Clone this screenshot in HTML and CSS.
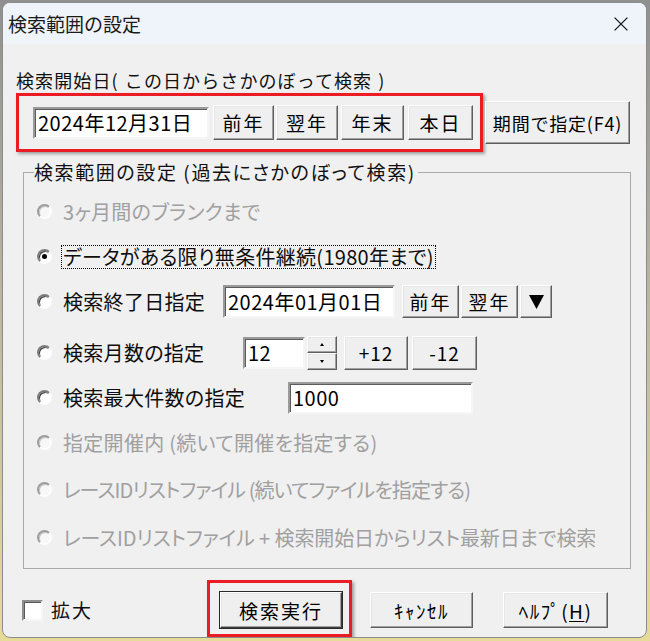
FILE: index.html
```html
<!DOCTYPE html>
<html lang="ja">
<head>
<meta charset="utf-8">
<title>検索範囲の設定</title>
<link rel="stylesheet" href="styles.css">
</head>
<body>
<div class="window">
  <div class="titlebar">
    <span class="title">検索範囲の設定</span>
    <svg class="close" width="14" height="14" viewBox="0 0 14 14"><path d="M0.6 0.6 L13.4 13.4 M13.4 0.6 L0.6 13.4" stroke="#1a1a1a" stroke-width="1.3" fill="none"/></svg>
  </div>
  <div class="content">
    <div class="start-label">検索開始日( この日からさかのぼって検索 )</div>
    <div class="start-row">
      <div class="mark start-box">
        <div class="field field-start">2024年12月31日</div>
        <button class="btn b-prev">前年</button>
        <button class="btn b-next">翌年</button>
        <button class="btn b-end">年末</button>
        <button class="btn b-today">本日</button>
      </div>
      <button class="btn btn-f4">期間で指定(F4)</button>
    </div>

    <fieldset class="group">
      <legend>検索範囲の設定 (過去にさかのぼって検索)</legend>
      <div class="row disabled"><span class="radio"></span><span class="opt">3ヶ月間のブランクまで</span></div>
      <div class="row"><span class="radio checked"></span><span class="opt focus">データがある限り無条件継続(1980年まで)</span></div>
      <div class="row">
        <span class="radio"></span><span class="opt w-end">検索終了日指定</span>
        <div class="field field-end">2024年01月01日</div>
        <div class="btn-group">
          <button class="btn b-sm">前年</button>
          <button class="btn b-sm">翌年</button>
          <button class="btn b-drop"><svg width="15" height="14" viewBox="0 0 15 14"><polygon points="0,0 15,0 7.5,14" fill="#000"/></svg></button>
        </div>
      </div>
      <div class="row row-months">
        <span class="radio"></span><span class="opt w-months">検索月数の指定</span>
        <div class="field field-months">12</div>
        <div class="spin">
          <span class="btn spin-btn"><span class="tri-up"></span></span>
          <span class="btn spin-btn"><span class="tri-down"></span></span>
        </div>
        <div class="btn-group pm">
          <button class="btn b-pm">+12</button>
          <button class="btn b-pm">-12</button>
        </div>
      </div>
      <div class="row">
        <span class="radio"></span><span class="opt w-max">検索最大件数の指定</span>
        <div class="field field-max">1000</div>
      </div>
      <div class="row disabled"><span class="radio"></span><span class="opt">指定開催内 (続いて開催を指定する)</span></div>
      <div class="row disabled row-id"><span class="radio"></span><span class="opt">レースIDリストファイル (続いてファイルを指定する)</span></div>
      <div class="row disabled row-id2"><span class="radio"></span><span class="opt">レースIDリストファイル + 検索開始日からリスト最新日まで検索</span></div>
    </fieldset>

    <div class="footer">
      <label class="check"><span class="box"></span><span class="check-text">拡大</span></label>
      <div class="mark exec-box"><button class="btn b-exec">検索実行</button></div>
      <button class="btn b-cancel">ｷｬﾝｾﾙ</button>
      <button class="btn b-help">ﾍﾙﾌﾟ(<u>H</u>)</button>
    </div>
  </div>
</div>
</body>
</html>
```

FILE: styles.css
```css
* { box-sizing: border-box; }
html, body { margin: 0; padding: 0; }
body {
  width: 650px;
  height: 641px;
  overflow: hidden;
  background: linear-gradient(#8f8f8f, #b8b5a2 45%, #e6dc98);
  font-family: "Noto Sans CJK JP", "Noto Sans", sans-serif;
  color: #111;
}

.window {
  margin: 2px 0 0 2px;
  width: 645px;
  height: 636px;
  border: 1px solid #8c8c8c;
  border-radius: 8px;
  overflow: hidden;
  background: #f0f0f0;
  display: flex;
  flex-direction: column;
}

.titlebar {
  height: 41px;
  flex: none;
  background: #eef4f9;
  display: flex;
  align-items: center;
  justify-content: space-between;
  padding: 0 18px 0 5px;
}
.title { font-size: 19px; line-height: 24px; color: #1a1a1a; }
.close { display: block; }

.content { flex: 1; }

.start-label {
  margin: 24px 0 0 13px;
  font-size: 18px;
  line-height: 24px;
  letter-spacing: 1.1px;
  word-spacing: 1px;
  white-space: nowrap;
}

.start-row {
  display: flex;
  align-items: center;
  margin: 1px 0 0 13px;
}

.mark {
  border: 3px solid #ec1c24;
  box-shadow: 2px 2px 3px rgba(0, 0, 0, 0.35);
}

.start-box {
  display: flex;
  align-items: center;
  padding: 9px 7px 9px 14px;
}

/* sunken edit field */
.field {
  background: #fff;
  border: 2px solid;
  border-color: #9a9a9a #f6f6f6 #f6f6f6 #9a9a9a;
  box-shadow: inset 1px 1px 0 #5c5c5c;
  font-size: 20px;
  line-height: 26px;
  padding: 0 0 0 3px;
  letter-spacing: 0.5px;
  white-space: nowrap;
  color: #000;
  display: flex;
  align-items: center;
}
.field-start { width: 176px; height: 32px; margin-right: 4px; }
.field-end { width: 172px; height: 33px; margin-right: 7px; }
.field-months { width: 62px; height: 32px; margin-right: 2px; }
.field-max { width: 185px; height: 32px; }

/* raised push button */
.btn {
  font-family: inherit;
  color: #000;
  background: #efefef;
  border: 1px solid;
  border-color: #fff #5e5e5e #5e5e5e #fff;
  box-shadow: inset -1px -1px 0 #a0a0a0, inset 1px 1px 0 #e6e6e6;
  padding: 0;
  margin: 0;
  font-size: 19px;
  letter-spacing: 2px;
  line-height: 1;
  display: flex;
  align-items: center;
  justify-content: center;
  white-space: nowrap;
}

.b-prev { width: 61px; height: 35px; margin-right: 2px; }
.b-next { width: 62px; height: 35px; margin-right: 3px; }
.b-end { width: 63px; height: 35px; margin-right: 4px; }
.b-today { width: 65px; height: 35px; }

.btn-f4 {
  margin-left: 2px;
  width: 145px;
  height: 43px;
  font-size: 18px;
  letter-spacing: 0.8px;
}

/* group box */
.group {
  margin: 8px 0 0 20px;
  width: 608px;
  border: 1px solid #a9a9a9;
  padding: 5px 0 8px 13px;
  min-width: 0;
}
.group legend {
  font-size: 19px;
  line-height: 24px;
  letter-spacing: 1.6px;
  font-feature-settings: "palt";
  padding: 0 2px 0 0;
  margin-left: -3px;
  white-space: nowrap;
}

.row {
  display: flex;
  align-items: center;
  height: 45px;
}
.row-months { margin-top: 6px; }
.row-id { margin-top: 2px; }
.row-id2 { margin-top: 3px; }

.radio {
  flex: none;
  position: relative;
  width: 15px;
  height: 15px;
  border-radius: 50%;
  border: 2px solid;
  border-color: #7c7c7c #fdfdfd #fdfdfd #7c7c7c;
  box-shadow: inset 1px 1px 0 #3c3c3c;
  background: #fff;
  margin-right: 11px;
}
.checked::after {
  content: "";
  position: absolute;
  left: 50%;
  top: 50%;
  width: 5px;
  height: 5px;
  margin: -2.5px 0 0 -2.5px;
  border-radius: 50%;
  background: #000;
}
.disabled .radio {
  border-color: #9c9c9c #fdfdfd #fdfdfd #9c9c9c;
  box-shadow: inset 1px 1px 0 #c8c8c8;
  background: #f7f7f7;
}

.opt {
  font-size: 20px;
  line-height: 20px;
  letter-spacing: 0.3px;
  font-feature-settings: "palt";
  white-space: nowrap;
  color: #0d0d0d;
}
.disabled .opt { color: #a0a0a0; }
.row-id .opt { letter-spacing: -0.9px; }
.row-id2 .opt { letter-spacing: -0.1px; }
.focus { outline: 1px dotted #000; outline-offset: 1px; }

.w-end { width: 160px; }
.w-months { width: 180px; }
.w-max { width: 225px; }

.btn-group { display: flex; }
.b-sm { width: 57px; height: 33px; margin-right: 2px; }
.b-drop { width: 32px; height: 33px; }
.b-drop svg { display: block; }

.spin {
  display: flex;
  flex-direction: column;
  width: 30px;
  height: 34px;
  margin-right: 7px;
}
.spin-btn { flex: 1; letter-spacing: 0; }
.tri-up, .tri-down {
  width: 0;
  height: 0;
  border-left: 2.5px solid transparent;
  border-right: 2.5px solid transparent;
}
.tri-up { border-bottom: 3px solid #000; }
.tri-down { border-top: 3px solid #000; }

.pm { gap: 4px; }
.b-pm { width: 64px; height: 34px; letter-spacing: 1px; }
.b-pm + .b-pm { width: 65px; }

/* footer */
.footer {
  display: flex;
  align-items: flex-start;
  margin: 11px 0 0 19px;
  height: 57px;
}
.check {
  display: flex;
  align-items: center;
  width: 185px;
  margin-top: 18px;
}
.box {
  width: 21px;
  height: 21px;
  background: #fff;
  border: 2px solid;
  border-color: #8e8e8e #f6f6f6 #f6f6f6 #8e8e8e;
  box-shadow: inset 1px 1px 0 #5a5a5a;
  margin-right: 8px;
}
.check-text { font-size: 19px; letter-spacing: 2px; line-height: 24px; color: #111; }

.exec-box { padding: 9px 7px 6px 10px; }
.b-exec {
  width: 122px;
  height: 36px;
  border-color: #fff #3c3c3c #3c3c3c #fff;
  outline: 1px solid #2a2a2a;
}
.b-cancel { width: 103px; height: 36px; margin: 12px 0 0 18px; letter-spacing: 1.5px; }
.b-help { width: 105px; height: 36px; margin: 12px 0 0 30px; letter-spacing: 1.5px; }
.b-help u { text-underline-offset: 2px; }
```
